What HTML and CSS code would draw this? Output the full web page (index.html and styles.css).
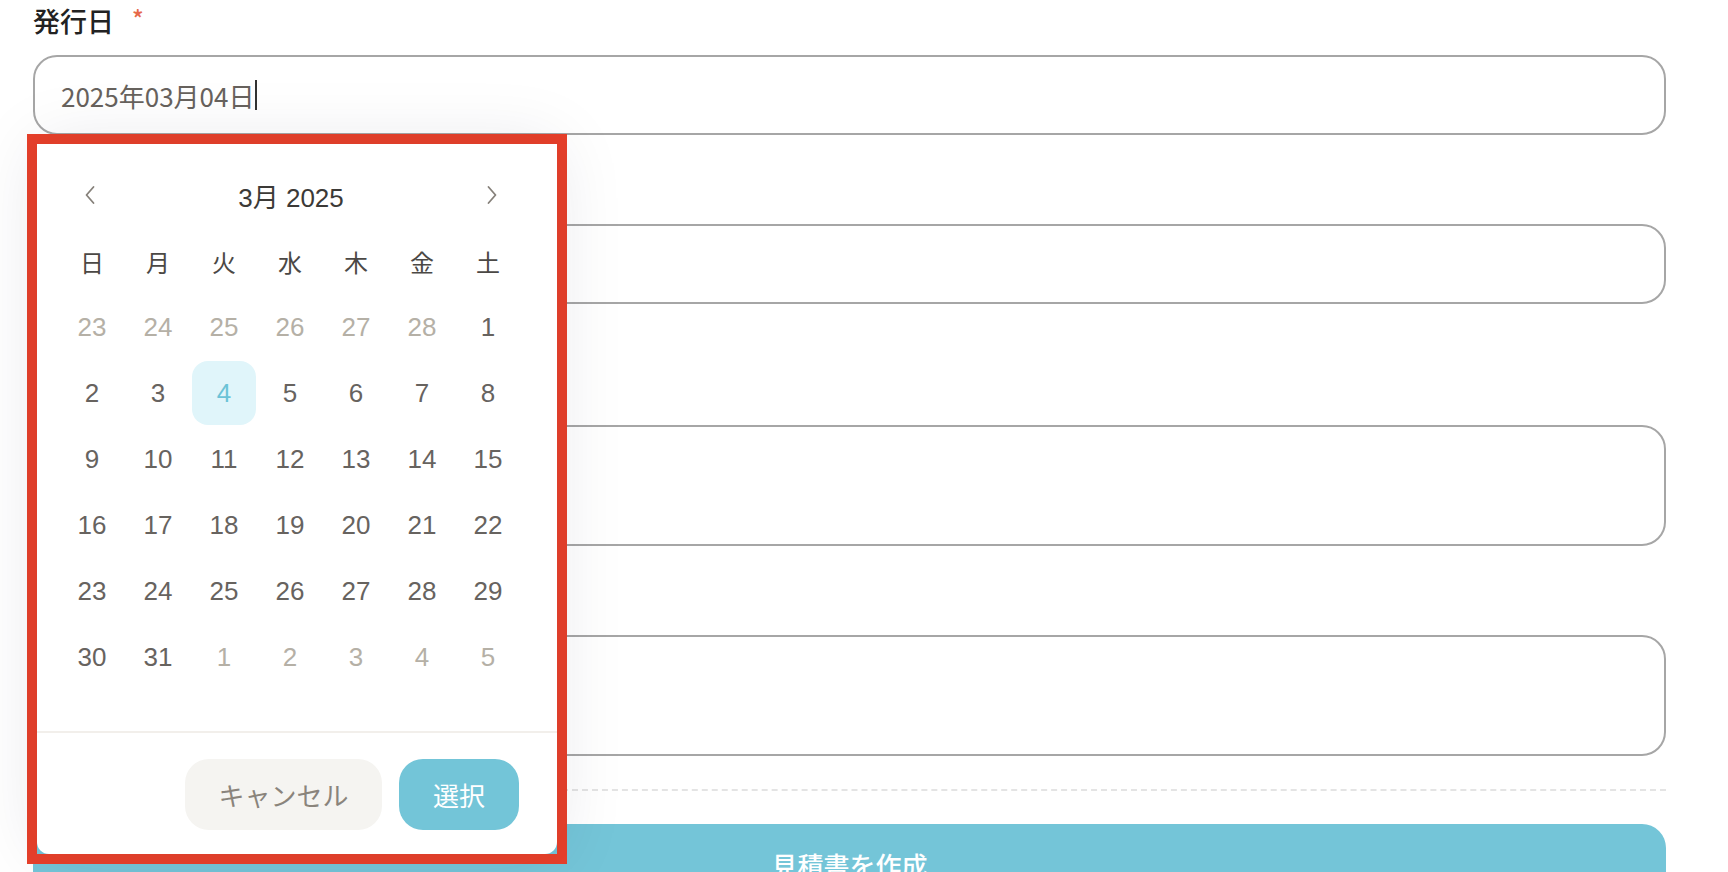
FILE: index.html
```html
<!DOCTYPE html>
<html lang="ja">
  <head>
    <meta charset="UTF-8" />
    <meta name="viewport" content="width=device-width, initial-scale=1.0" />
    <title>見積書作成</title>
    <link rel="stylesheet" href="styles.css">
  </head>
  <body>
    <div class="page">
      <form class="form">
        <div class="field">
          <label class="label">発行日<span class="req">*</span></label>
          <div class="input date-input">2025年03月04日<span class="caret"></span></div>
        </div>
        <!-- 下の項目のラベルはピッカーに隠れている -->
        <div class="field field-2">
          <div class="input"></div>
        </div>
        <div class="field field-3">
          <div class="input textarea"></div>
        </div>
        <div class="field field-4">
          <div class="input textarea"></div>
        </div>
        <div class="dashed"></div>
        <button type="button" class="submit">見積書を作成</button>
      </form>

      <!-- 日付ピッカー（赤枠で囲んだ部分） -->
      <div class="highlight">
        <div class="picker">
          <div class="picker-head">
            <a href="javascript:;" class="nav">
              <svg width="14" height="22" viewBox="0 0 14 22"><path d="M10.5 3 L3.5 11 L10.5 19" fill="none" stroke="#86817a" stroke-width="1.8" stroke-linecap="round" stroke-linejoin="round"/></svg>
            </a>
            <div class="month">3月 2025</div>
            <a href="javascript:;" class="nav">
              <svg width="14" height="22" viewBox="0 0 14 22"><path d="M3.5 3 L10.5 11 L3.5 19" fill="none" stroke="#86817a" stroke-width="1.8" stroke-linecap="round" stroke-linejoin="round"/></svg>
            </a>
          </div>
          <div class="grid">
            <div class="wd">日</div><div class="wd">月</div><div class="wd">火</div><div class="wd">水</div><div class="wd">木</div><div class="wd">金</div><div class="wd">土</div>
            <div class="day muted">23</div><div class="day muted">24</div><div class="day muted">25</div><div class="day muted">26</div><div class="day muted">27</div><div class="day muted">28</div><div class="day">1</div>
            <div class="day">2</div><div class="day">3</div><div class="day selected">4</div><div class="day">5</div><div class="day">6</div><div class="day">7</div><div class="day">8</div>
            <div class="day">9</div><div class="day">10</div><div class="day">11</div><div class="day">12</div><div class="day">13</div><div class="day">14</div><div class="day">15</div>
            <div class="day">16</div><div class="day">17</div><div class="day">18</div><div class="day">19</div><div class="day">20</div><div class="day">21</div><div class="day">22</div>
            <div class="day">23</div><div class="day">24</div><div class="day">25</div><div class="day">26</div><div class="day">27</div><div class="day">28</div><div class="day">29</div>
            <div class="day">30</div><div class="day">31</div><div class="day muted">1</div><div class="day muted">2</div><div class="day muted">3</div><div class="day muted">4</div><div class="day muted">5</div>
          </div>
          <div class="picker-foot">
            <button type="button" class="btn cancel">キャンセル</button>
            <button type="button" class="btn ok">選択</button>
          </div>
        </div>
      </div>
    </div>
  </body>
</html>
```

FILE: styles.css
```css
* {
  margin: 0;
  padding: 0;
  box-sizing: border-box;
}
html,
body {
  background: #fff;
  overflow: hidden;
}
body {
  font-family: "Noto Sans CJK JP", sans-serif;
}
.page {
  position: relative;
  height: 872px;
}
.form {
  display: flex;
  flex-direction: column;
  padding: 0 62px 0 33px;
}
.field {
  display: flex;
  flex-direction: column;
}
.field-2 {
  margin-top: 76px;
}
.field-3 {
  margin-top: 108px;
}
.field-4 {
  margin-top: 76px;
}
.label {
  height: 42px;
  line-height: 42px;
  font-size: 27px;
  font-weight: 500;
  color: #222;
}
.label .req {
  color: #e6694a;
  margin-left: 18px;
  font-size: 24px;
  vertical-align: top;
  line-height: 36px;
}
.input {
  margin-top: 13px;
  height: 80px;
  border: 2px solid #a6a6a6;
  border-radius: 24px;
  background: #fff;
}
.textarea {
  height: 121px;
}
.date-input {
  display: flex;
  align-items: center;
  padding-left: 26px;
  font-size: 26px;
  color: #67625d;
}
.caret {
  display: inline-block;
  width: 2px;
  height: 30px;
  margin-left: 1px;
  background: #333;
}
.dashed {
  margin-top: 33px;
  border-top: 2px dashed #e4e4e4;
}
.submit {
  margin-top: 33px;
  height: 80px;
  border: none;
  border-radius: 24px;
  background: #74c5d8;
  color: #fff;
  font-family: "Noto Sans CJK JP", sans-serif;
  font-size: 26px;
  font-weight: 500;
}

/* 赤枠 */
.highlight {
  position: absolute;
  left: 27px;
  top: 134px;
  width: 540px;
  height: 730px;
  border: 10px solid #e8402a;
  z-index: 10;
}
.picker {
  width: 520px;
  height: 710px;
  background: #fff;
  border-radius: 0 0 12px 12px;
  box-shadow: 0 0 70px rgba(30, 30, 60, 0.1);
  display: flex;
  flex-direction: column;
  padding: 21px 0 0 23px;
  font-family: "Liberation Sans", "Noto Sans CJK JP", sans-serif;
}
.picker-head {
  width: 462px;
  height: 60px;
  display: flex;
  align-items: center;
  justify-content: space-between;
}
.nav {
  width: 60px;
  height: 60px;
  display: flex;
  align-items: center;
  justify-content: center;
}
.month {
  font-size: 26px;
  color: #3c3a37;
}
.grid {
  margin-top: 4px;
  display: grid;
  grid-template-columns: repeat(7, 64px);
  grid-auto-rows: 64px;
  gap: 2px;
}
.wd,
.day {
  display: flex;
  align-items: center;
  justify-content: center;
  font-size: 26px;
}
.wd {
  color: #4b4845;
  font-family: "Noto Sans CJK JP", sans-serif;
  font-size: 24px;
}
.day {
  color: #67635f;
  border-radius: 16px;
}
.day.muted {
  color: #b5b0a6;
}
.day.selected {
  background: #e0f5fa;
  color: #6cc3d7;
}
.picker-foot {
  margin: 42px 0 0 -23px;
  border-top: 2px solid #f2efeb;
  padding: 26px 38px 0 0;
  display: flex;
  justify-content: flex-end;
  gap: 17px;
}
.btn {
  height: 71px;
  border: none;
  border-radius: 24px;
  font-family: "Noto Sans CJK JP", sans-serif;
  font-size: 26px;
  font-weight: 400;
}
.cancel {
  width: 197px;
  background: #f5f4f1;
  color: #8a847c;
}
.ok {
  width: 120px;
  background: #73c5d8;
  color: #fff;
}
```
